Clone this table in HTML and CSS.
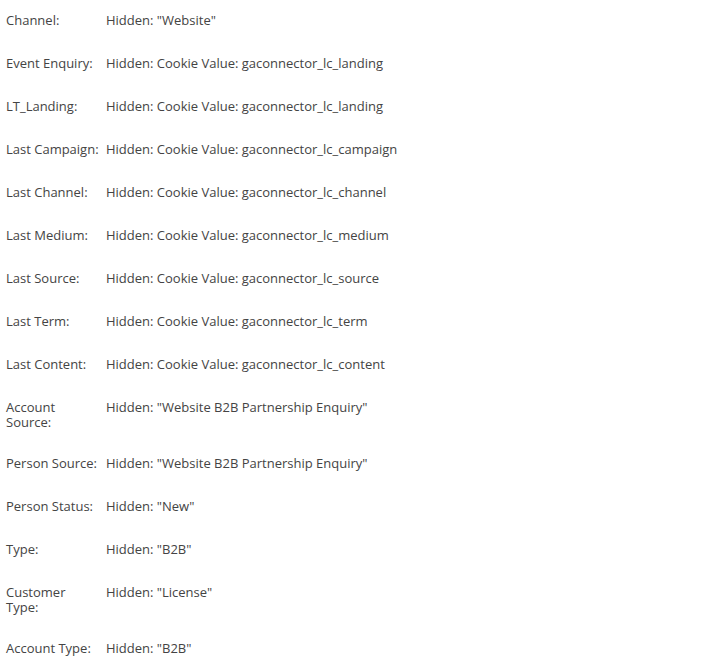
FILE: index.html
```html
<!DOCTYPE html>
<html lang="en">
<head>
    <meta charset="UTF-8">
    <title>Form Fields</title>
    <link rel="stylesheet" href="styles.css">
</head>
<body>

<div class="field-list">
    <div class="field-row">
        <div class="field-label">Channel:</div>
        <div class="field-value">Hidden: "Website"</div>
    </div>
    <div class="field-row">
        <div class="field-label">Event Enquiry:</div>
        <div class="field-value">Hidden: Cookie Value: gaconnector_lc_landing</div>
    </div>
    <div class="field-row">
        <div class="field-label">LT_Landing:</div>
        <div class="field-value">Hidden: Cookie Value: gaconnector_lc_landing</div>
    </div>
    <div class="field-row">
        <div class="field-label">Last Campaign:</div>
        <div class="field-value">Hidden: Cookie Value: gaconnector_lc_campaign</div>
    </div>
    <div class="field-row">
        <div class="field-label">Last Channel:</div>
        <div class="field-value">Hidden: Cookie Value: gaconnector_lc_channel</div>
    </div>
    <div class="field-row">
        <div class="field-label">Last Medium:</div>
        <div class="field-value">Hidden: Cookie Value: gaconnector_lc_medium</div>
    </div>
    <div class="field-row">
        <div class="field-label">Last Source:</div>
        <div class="field-value">Hidden: Cookie Value: gaconnector_lc_source</div>
    </div>
    <div class="field-row">
        <div class="field-label">Last Term:</div>
        <div class="field-value">Hidden: Cookie Value: gaconnector_lc_term</div>
    </div>
    <div class="field-row">
        <div class="field-label">Last Content:</div>
        <div class="field-value">Hidden: Cookie Value: gaconnector_lc_content</div>
    </div>
    <div class="field-row">
        <div class="field-label">Account Source:</div>
        <div class="field-value">Hidden: "Website B2B Partnership Enquiry"</div>
    </div>
    <div class="field-row">
        <div class="field-label">Person Source:</div>
        <div class="field-value">Hidden: "Website B2B Partnership Enquiry"</div>
    </div>
    <div class="field-row">
        <div class="field-label">Person Status:</div>
        <div class="field-value">Hidden: "New"</div>
    </div>
    <div class="field-row">
        <div class="field-label">Type:</div>
        <div class="field-value">Hidden: "B2B"</div>
    </div>
    <div class="field-row">
        <div class="field-label">Customer Type:</div>
        <div class="field-value">Hidden: "License"</div>
    </div>
    <div class="field-row">
        <div class="field-label">Account Type:</div>
        <div class="field-value">Hidden: "B2B"</div>
    </div>
</div>

</body>
</html>
```

FILE: styles.css
```css
body {
    font-family: "Open Sans", Arial, sans-serif;
    font-size: 13px;
    line-height: 15px;
    color: #444;
    background-color: #fff;
    margin: 0;
    padding: 0;
}
.field-list {
    display: flex;
    flex-direction: column;
}
.field-row {
    display: flex;
    box-sizing: border-box;
    min-height: 43px;
    padding: 13px 0 13px 6px;
}
.field-label {
    flex: 0 0 93px;
}
.field-value {
    flex: 1;
    margin-left: 7px;
}
```
